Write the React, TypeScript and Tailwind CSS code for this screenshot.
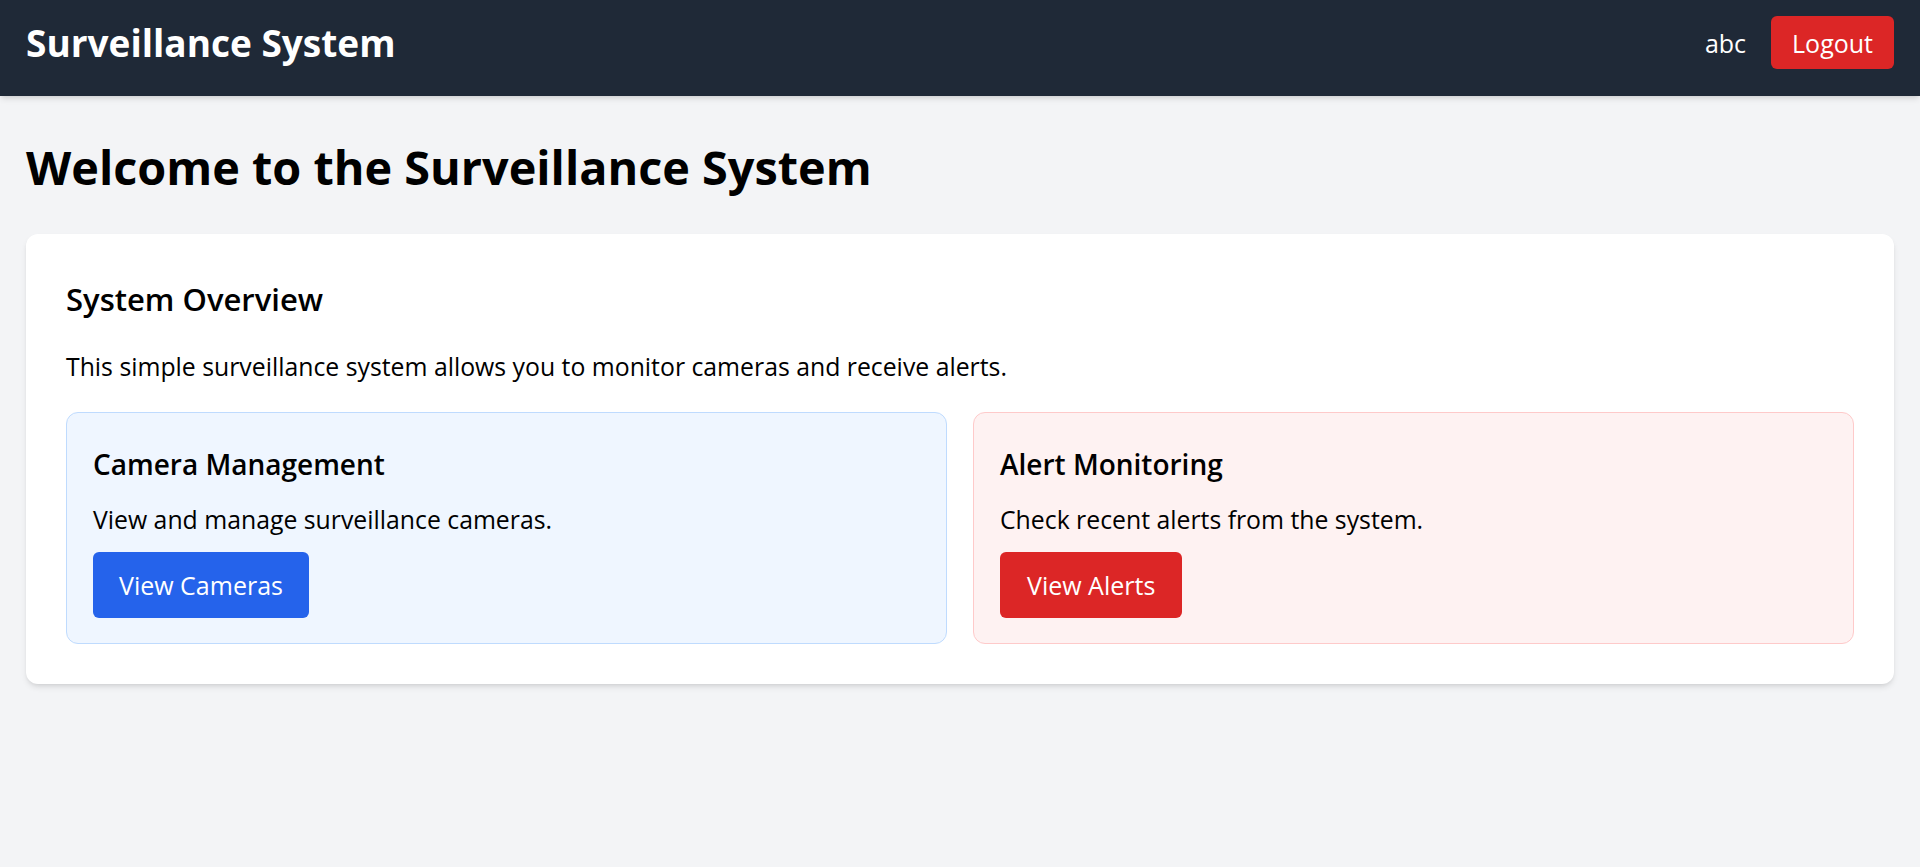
export default function App() {
  return (
    <div className="min-h-[867px] bg-[#f3f4f6] text-black" style={{ fontFamily: '"Open Sans", "Noto Sans", sans-serif' }}>
      {/* Top bar */}
      <header className="relative h-[96px] bg-[#1f2937] px-[26px] pb-[11px] flex items-center justify-between shadow-md">
        <h1 className="text-white text-[37px] leading-[48px] font-bold">Surveillance System</h1>
        <div className="flex items-center gap-[25px]">
          <span className="text-white text-[25px] leading-[36px]">abc</span>
          <button className="bg-[#dc2626] text-white text-[25px] leading-[36px] h-[53px] px-[21px] rounded-[6px]">Logout</button>
        </div>
      </header>

      <main className="px-[26px]">
        <h2 className="text-[46.8px] font-bold leading-[60px] pt-[41px] pb-[37px]">Welcome to the Surveillance System</h2>

        <div className="bg-white rounded-[12px] shadow-md p-[40px]">
          <h3 className="text-[31px] font-semibold leading-[40px] mt-[5px]">System Overview</h3>
          <p className="text-[24.8px] leading-[36px] mt-[29px]">
            This simple surveillance system allows you to monitor cameras and receive alerts.
          </p>

          <div className="grid grid-cols-2 gap-[26px] mt-[28px]">
            <div className="bg-[#eff6ff] border border-[#bfdbfe] rounded-[12px] px-[26px] pt-[33px] h-[232px]">
              <h4 className="text-[28px] font-semibold leading-[36px]">Camera Management</h4>
              <p className="text-[24.8px] leading-[36px] mt-[19px]">View and manage surveillance cameras.</p>
              <button className="mt-[15px] bg-[#2563eb] text-white text-[25px] leading-[36px] h-[66px] px-[26px] rounded-[6px]">View Cameras</button>
            </div>
            <div className="bg-[#fef2f2] border border-[#fecaca] rounded-[12px] px-[26px] pt-[33px] h-[232px]">
              <h4 className="text-[28px] font-semibold leading-[36px]">Alert Monitoring</h4>
              <p className="text-[24.8px] leading-[36px] mt-[19px]">Check recent alerts from the system.</p>
              <button className="mt-[15px] bg-[#dc2626] text-white text-[25px] leading-[36px] h-[66px] px-[27px] rounded-[6px]">View Alerts</button>
            </div>
          </div>
        </div>
      </main>
    </div>
  );
}
